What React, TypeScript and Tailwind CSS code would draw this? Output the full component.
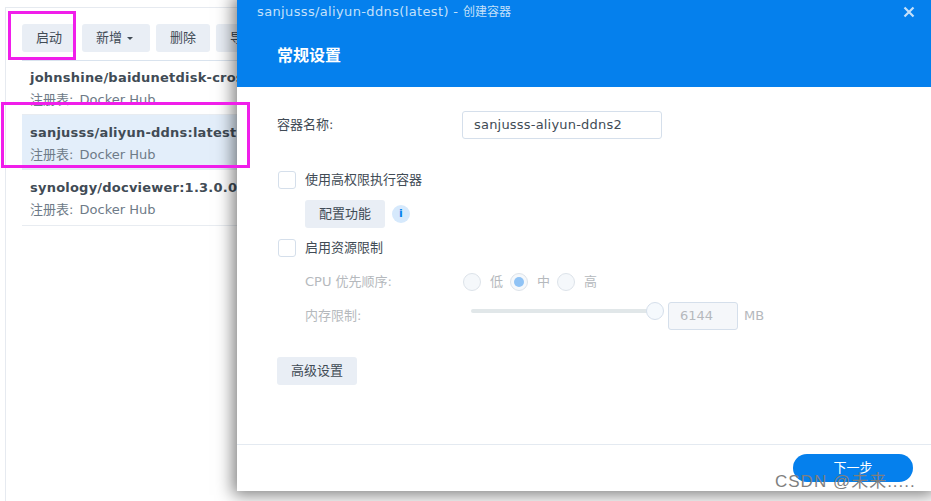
const font = { fontFamily: '"DejaVu Sans", "Noto Sans CJK SC", sans-serif' };

const images = [
  { name: "johnshine/baidunetdisk-crossover", selected: false },
  { name: "sanjusss/aliyun-ddns:latest", selected: true },
  { name: "synology/docviewer:1.3.0.0", selected: false },
];

function ToolButton({ label, caret }: { label: string; caret?: boolean }) {
  return (
    <button
      className={`flex h-7 shrink-0 items-center gap-[5px] rounded-[3px] bg-[#e9eef5] pl-[14px] text-[13px] text-[#414b55] ${caret ? "pr-[17px]" : "pr-[14px]"}`}
    >
      {label}
      {caret && <span className="mt-px h-0 w-0 border-x-[3.5px] border-t-[3.5px] border-x-transparent border-t-[#414b55]" />}
    </button>
  );
}

function Checkbox() {
  return <span className="h-[18px] w-[18px] shrink-0 rounded-[3px] border border-[#d5dfeb] bg-white" />;
}

function Radio({ label, checked }: { label: string; checked?: boolean }) {
  return (
    <div className="flex w-[47px] items-center">
      <span className="flex h-[18px] w-[18px] shrink-0 items-center justify-center rounded-full border border-[#dde3ea] bg-[#f5f8fb]">
        {checked && <span className="h-[10px] w-[10px] rounded-full bg-[#90c3f5]" />}
      </span>
      <span className="ml-[9px] text-[13px] text-[#b5b9bd]">{label}</span>
    </div>
  );
}

export default function App() {
  return (
    <div className="relative h-[501px] w-[931px] overflow-hidden bg-white" style={font}>
      {/* background list window */}
      <div className="ml-[5px] mt-[7px] h-[494px] border-l border-t border-[#e6eaf0] pl-4 pt-[16px]">
        <div className="flex gap-[6px]">
          <ToolButton label="启动" />
          <ToolButton label="新增" caret />
          <ToolButton label="删除" />
          <ToolButton label="导出" />
        </div>
        <div className="mt-2 border-t border-[#d9e3ee]">
          {images.map((image) => (
            <div
              key={image.name}
              className={`h-[55px] overflow-hidden whitespace-nowrap border-b border-[#e8ecf1] pl-2 pt-[7px] first:h-[54px] first:pt-[6px] last:h-[56px] ${image.selected ? "bg-[#e3eefa]" : ""}`}
            >
              <div className="text-[13px] font-bold leading-[22px] tracking-[0.22px] text-[#414b55]">{image.name}</div>
              <div className="text-[13px] leading-[22px] text-[#6e7b88]">
                注册表:<span className="ml-[2px]"> Docker Hub</span>
              </div>
            </div>
          ))}
        </div>
      </div>

      {/* create container dialog */}
      <div className="absolute left-[237px] top-0 flex h-[491px] w-[694px] flex-col bg-white shadow-[0_0_16px_4px_rgba(0,0,0,0.5)]">
        <div className="h-[87px] shrink-0 bg-[#0580ed] px-5">
          <div className="flex items-center justify-between pt-[3px]">
            <span className="text-[13px] leading-[18px] tracking-[0.36px] text-[#c4e0fa]">
              sanjusss/aliyun-ddns(latest) - <span className="text-xs tracking-normal">创建容器</span>
            </span>
            <svg className="mr-[-4px]" width="12" height="12" viewBox="0 0 12 12">
              <path d="M1.5 1.5l9 9M10.5 1.5l-9 9" stroke="#c4e0fa" strokeWidth="2.2" />
            </svg>
          </div>
          <div className="pl-5 pt-[23px] text-base font-bold leading-6 text-white">常规设置</div>
        </div>

        <div className="flex-1 pl-10 pt-6 text-[13px] leading-[18px] text-[#414b55]">
          <div className="flex items-center">
            <span className="w-[185px]">容器名称:</span>
            <div className="flex h-7 w-[200px] items-center rounded-[3px] border border-[#d5dfeb] px-[11px] tracking-[0.2px]">
              sanjusss-aliyun-ddns2
            </div>
          </div>

          <div className="mt-[32px] flex items-center gap-[9px] pl-px">
            <Checkbox />
            <span>使用高权限执行容器</span>
          </div>
          <div className="mt-[11px] flex items-center gap-[7px] pl-7">
            <button className="h-7 w-20 rounded-[3px] bg-[#e9eef5]">配置功能</button>
            <span className="flex h-[18px] w-[18px] items-center justify-center rounded-full bg-[#d6e9fc] text-[11px] font-bold text-[#0580ed]">
              i
            </span>
          </div>
          <div className="mt-[11px] flex items-center gap-[9px] pl-px">
            <Checkbox />
            <span>启用资源限制</span>
          </div>

          <div className="mt-4 flex h-[18px] items-center pl-7 text-[#b5b9bd]">
            <span className="w-[158px]">CPU 优先顺序:</span>
            <Radio label="低" />
            <Radio label="中" checked />
            <Radio label="高" />
          </div>
          <div className="mt-[11px] flex h-7 items-center pl-7 text-[#b5b9bd]">
            <span className="w-[166px]">内存限制:</span>
            <div className="relative -mt-[10px] h-1 w-[184px] rounded-full bg-[#e1e7e9]">
              <span className="absolute -right-[9px] -top-[7px] h-[18px] w-[18px] rounded-full border border-[#d5dfeb] bg-[#f5f9fd]" />
            </div>
            <div className="ml-[13px] flex h-7 w-[70px] items-center rounded-[3px] border border-[#d5dfeb] bg-[#f5f7fa] px-[11px]">
              6144
            </div>
            <span className="ml-[6px]">MB</span>
          </div>

          <button className="mt-[27px] h-7 w-20 rounded-[3px] bg-[#e9eef5]">高级设置</button>
        </div>

        <div className="flex h-[47px] shrink-0 justify-end border-t border-[#e4eaf1] pr-[18px] pt-[9px]">
          <button className="h-7 w-[120px] rounded-full bg-[#0580ed] text-[13px] text-white">下一步</button>
        </div>
      </div>

      {/* annotation boxes */}
      <div className="absolute left-2 top-[11px] h-[49px] w-[68px] border-[3px] border-[#f01eea]" />
      <div className="absolute left-px top-[102px] h-[66px] w-[249px] border-[3px] border-[#f01eea]" />

      {/* watermark */}
      <div
        className="absolute left-[775px] top-[472px] whitespace-nowrap text-[17px] leading-5 tracking-[1px] text-[#7f7f7f]"
        style={{ fontFamily: '"Liberation Sans", "Noto Sans CJK SC", sans-serif' }}
      >
        CSDN @未来.....
      </div>
    </div>
  );
}
